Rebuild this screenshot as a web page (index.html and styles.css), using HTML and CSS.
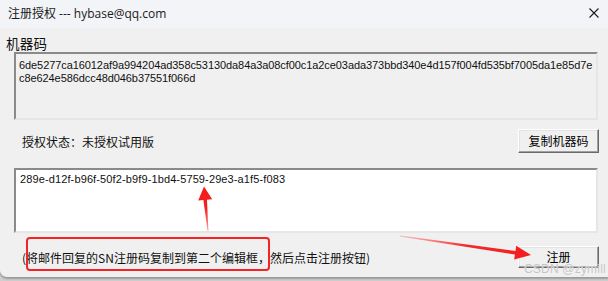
FILE: index.html
```html
<!DOCTYPE html>
<html lang="zh-CN">
<head>
<meta charset="utf-8">
<title>注册授权</title>
<link rel="stylesheet" href="styles.css">
</head>
<body>
<div class="window">
  <div class="titlebar">
    <span class="title">注册授权 --- hybase@qq.com</span>
    <svg class="close" width="10" height="10" viewBox="0 0 10 10">
      <path d="M0.5 0.5 L9.5 9.5 M9.5 0.5 L0.5 9.5" stroke="#1b1b1b" stroke-width="1.1" fill="none"/>
    </svg>
  </div>
  <div class="content">
    <div class="label">机器码</div>
    <div class="field readonly">6de5277ca16012af9a994204ad358c53130da84a3a08cf00c1a2ce03ada373bbd340e4d157f004fd535bf7005da1e85d7e<br>c8e624e586dcc48d046b37551f066d</div>
    <div class="row status-row">
      <span class="status">授权状态：未授权试用版</span>
      <button class="btn">复制机器码</button>
    </div>
    <div class="field edit">289e-d12f-b96f-50f2-b9f9-1bd4-5759-29e3-a1f5-f083</div>
    <div class="row bottom-row">
      <span class="hint">(将邮件回复的SN注册码复制到第二个编辑框，然后点击注册按钮)</span>
      <button class="btn">注册</button>
    </div>
  </div>
  <div class="redbox"></div>
  <svg class="annot" width="608" height="281" viewBox="0 0 608 281">
    <defs>
      <linearGradient id="g1" x1="208" y1="231" x2="204" y2="186" gradientUnits="userSpaceOnUse">
        <stop offset="0" stop-color="#ff4a4a" stop-opacity="0.55"/>
        <stop offset="0.5" stop-color="#f42020"/>
        <stop offset="1" stop-color="#f41c1c"/>
      </linearGradient>
      <linearGradient id="g2" x1="400" y1="236" x2="531" y2="255" gradientUnits="userSpaceOnUse">
        <stop offset="0" stop-color="#ff5a5a" stop-opacity="0.35"/>
        <stop offset="0.5" stop-color="#f42a2a"/>
        <stop offset="1" stop-color="#f41c1c"/>
      </linearGradient>
    </defs>
    <polygon fill="url(#g1)" points="207.6,231 203.4,200.1 198.2,200.6 204,186.5 212.2,199.3 207,199.7 208.4,231"/>
    <polygon fill="url(#g2)" points="400,235.6 515.5,250.9 516.2,245.8 531,255 514.2,259.6 514.9,254.5 400,236.4"/>
  </svg>
  <span class="watermark">CSDN @zymill</span>
</div>
</body>
</html>
```

FILE: styles.css
```css
html, body {
  margin: 0;
  padding: 0;
}
body {
  width: 608px;
  height: 281px;
  background: #cfcfcf;
  overflow: hidden;
  font-family: "Noto Sans CJK SC", "Liberation Sans", sans-serif;
}
.window {
  position: relative;
  width: 608px;
  height: 277px;
  background: #f0f0f0;
  border-bottom: 1px solid #9c9c9c;
  border-bottom-left-radius: 7px;
  box-shadow: 0 1px 2px rgba(0,0,0,0.25);
  overflow: hidden;
}
.titlebar {
  height: 28px;
  background: #f2f4f7;
  display: flex;
  align-items: center;
  justify-content: space-between;
  padding: 0 9px 2px 8px;
  box-sizing: border-box;
}
.title {
  font-family: "Open Sans", "Noto Sans CJK SC", sans-serif;
  font-size: 12px;
  color: #1a1a1a;
}
.close {
  display: block;
}
.content {
  padding: 0 10px 0 14px;
  display: flex;
  flex-direction: column;
}
.label {
  margin: 7px 0 0 -8px;
  height: 17px;
  line-height: 17px;
  font-size: 13.5px;
  color: #111;
  letter-spacing: 0.3px;
}
.field {
  box-sizing: border-box;
  border-style: solid;
  border-width: 2px;
  border-color: #8a8a8a #e6e6e6 #e6e6e6 #8a8a8a;
  font-family: "Liberation Sans", "Noto Sans CJK SC", sans-serif;
  font-size: 11px;
  line-height: 13px;
  color: #101010;
  white-space: nowrap;
}
.readonly {
  height: 68px;
  background: #f0f0f0;
  padding: 5px 0 0 3px;
  letter-spacing: -0.08px;
}
.edit {
  margin-top: 15px;
  height: 65px;
  background: #ffffff;
  padding: 3px 0 0 4px;
  letter-spacing: 0.12px;
}
.row {
  display: flex;
  align-items: center;
  justify-content: space-between;
  padding-left: 8px;
}
.status-row {
  margin-top: 9px;
  height: 24px;
}
.bottom-row {
  margin-top: 13px;
  height: 22px;
}
.status, .hint {
  font-size: 12px;
  color: #111;
}
.btn {
  margin: 0 -1px 0 0;
  width: 81px;
  height: 100%;
  box-sizing: border-box;
  background: #f0f0f0;
  border-style: solid;
  border-width: 1px;
  border-color: #ffffff #696969 #696969 #ffffff;
  box-shadow: inset -1px -1px 0 #a0a0a0, inset 1px 1px 0 #e3e3e3;
  font-family: "Noto Sans CJK SC", sans-serif;
  font-size: 12px;
  color: #000;
  padding: 0;
  line-height: 1;
}
.redbox {
  position: absolute;
  left: 26px;
  top: 237px;
  width: 244px;
  height: 34px;
  box-sizing: border-box;
  border: 2px solid #f42424;
  border-radius: 4px;
}
.annot {
  position: absolute;
  left: 0;
  top: 0;
  pointer-events: none;
}
.watermark {
  position: absolute;
  left: 524px;
  top: 262px;
  font-family: "Liberation Sans", sans-serif;
  font-size: 12px;
  color: #c4c4c4;
  text-shadow: 0 0 1px #ffffff;
  letter-spacing: 0.2px;
}
```
